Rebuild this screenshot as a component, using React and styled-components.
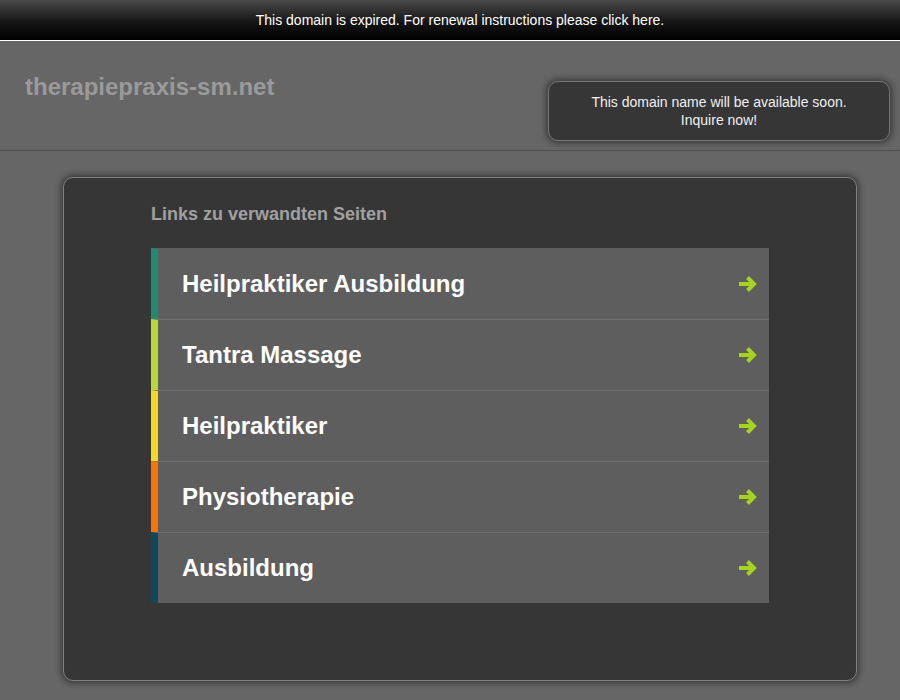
import React from 'react';
import styled, { createGlobalStyle } from 'styled-components';

const GlobalStyle = createGlobalStyle`
  html, body {
    margin: 0;
    padding: 0;
    background: #666666;
    font-family: "Liberation Sans", Arial, sans-serif;
  }
`;

const links = [
  { title: 'Heilpraktiker Ausbildung', color: '#1e8c6f' },
  { title: 'Tantra Massage', color: '#b8d934' },
  { title: 'Heilpraktiker', color: '#f5d81f' },
  { title: 'Physiotherapie', color: '#ff7300' },
  { title: 'Ausbildung', color: '#0d4a5e' },
];

const Page = styled.div`
  width: 900px;
  height: 700px;
  overflow: hidden;
  background: #666666;
`;

const TopBar = styled.div`
  height: 40px;
  padding-left: 20px;
  display: flex;
  align-items: center;
  justify-content: center;
  background: linear-gradient(180deg, #4a4a4a 0%, #151515 55%, #000000 100%);
  border-bottom: 1px solid #ffffff;
  color: #ffffff;
  font-size: 14px;
  cursor: pointer;
`;

const Header = styled.div`
  height: 110px;
  padding: 0 10px 0 25px;
  display: flex;
  justify-content: space-between;
  align-items: flex-start;
  border-bottom: 1px solid #4e4e4e;
  box-sizing: border-box;
`;

const DomainTitle = styled.h1`
  margin: 32px 0 0;
  font-size: 24px;
  font-weight: bold;
  color: #9a9a9a;
`;

const Notice = styled.div`
  margin-top: 40px;
  width: 342px;
  height: 60px;
  box-sizing: border-box;
  display: flex;
  flex-direction: column;
  align-items: center;
  justify-content: center;
  background: #363636;
  border: 1px solid #777777;
  border-radius: 10px;
  box-shadow: 0 0 6px 2px rgba(0, 0, 0, 0.45);
  color: #f0f0f0;
  font-size: 14px;
  line-height: 18px;
`;

const Main = styled.div`
  margin: 26px 43px 0 63px;
  height: 504px;
  box-sizing: border-box;
  padding: 26px 87px 0 87px;
  background: #363636;
  border: 1px solid #808080;
  border-radius: 10px;
  box-shadow: 0 0 6px 2px rgba(0, 0, 0, 0.45);
`;

const SectionTitle = styled.h2`
  margin: 0 0 23px;
  font-size: 18px;
  font-weight: bold;
  color: #a0a0a0;
`;

const LinkList = styled.div`
  display: flex;
  flex-direction: column;
`;

const LinkRow = styled.a`
  height: 71px;
  box-sizing: border-box;
  display: flex;
  align-items: center;
  justify-content: space-between;
  padding: 0 11px 0 24px;
  background: #5e5e5e;
  border-left: 7px solid ${(p) => p.$accent};
  border-top: 1px solid ${(p) => (p.$first ? '#5e5e5e' : '#707070')};
  color: #ffffff;
  font-size: 24px;
  font-weight: bold;
  text-decoration: none;
`;

const Arrow = () => (
  <svg width="20" height="18" viewBox="0 0 20 18">
    <path d="M1 9 H15" stroke="#a6d41c" strokeWidth="4" />
    <path d="M9.5 2.5 L16 9 L9.5 15.5" stroke="#a6d41c" strokeWidth="4" fill="none" />
  </svg>
);

export default function App() {
  return (
    <Page>
      <GlobalStyle />
      <TopBar>This domain is expired. For renewal instructions please click here.</TopBar>
      <Header>
        <DomainTitle>therapiepraxis-sm.net</DomainTitle>
        <Notice>
          <span>This domain name will be available soon.</span>
          <span>Inquire now!</span>
        </Notice>
      </Header>
      <Main>
        <SectionTitle>Links zu verwandten Seiten</SectionTitle>
        <LinkList>
          {links.map((l, i) => (
            <LinkRow key={l.title} href="#" $accent={l.color} $first={i === 0}>
              {l.title}
              <Arrow />
            </LinkRow>
          ))}
        </LinkList>
      </Main>
    </Page>
  );
}
